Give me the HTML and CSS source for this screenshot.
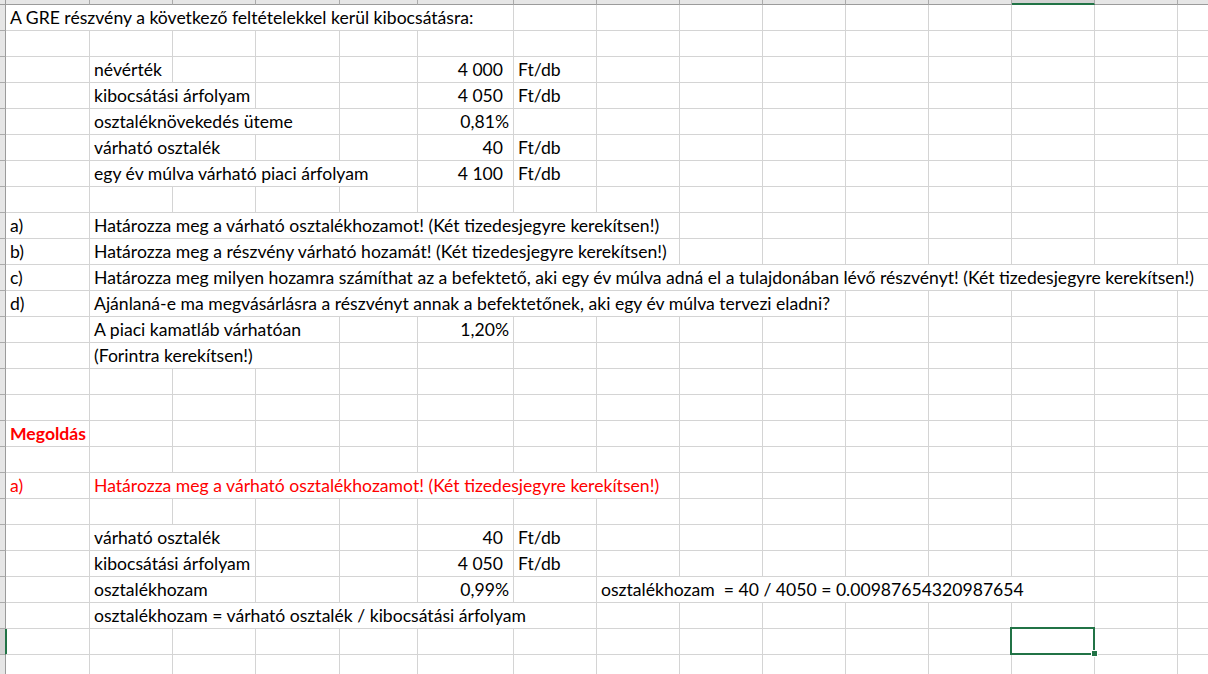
FILE: index.html
```html
<!DOCTYPE html>
<html lang="hu">
<head>
<meta charset="utf-8">
<title>GRE részvény</title>
<link rel="stylesheet" href="styles.css">
</head>
<body>
<div class="sheet">
  <!-- column header strip -->
  <div class="corner"></div>
  <div class="h"></div><div class="h"></div><div class="h"></div><div class="h"></div><div class="h"></div>
  <div class="h"></div><div class="h"></div><div class="h"></div><div class="h"></div><div class="h"></div>
  <div class="h"></div><div class="h"></div><div class="h hsel"></div><div class="h"></div><div class="h"></div>

  <!-- row 1 -->
  <div class="rh"></div>
  <div class="c s6">A GRE részvény a következő feltételekkel kerül kibocsátásra:</div>
  <div class="c"></div><div class="c"></div><div class="c"></div><div class="c"></div><div class="c"></div>
  <div class="c"></div><div class="c"></div><div class="c"></div><div class="c"></div>

  <!-- row 2 -->
  <div class="rh"></div>
  <div class="c"></div><div class="c"></div><div class="c"></div><div class="c"></div><div class="c"></div>
  <div class="c"></div><div class="c"></div><div class="c"></div><div class="c"></div><div class="c"></div>
  <div class="c"></div><div class="c"></div><div class="c"></div><div class="c"></div><div class="c"></div>

  <!-- row 3 -->
  <div class="rh"></div>
  <div class="c"></div>
  <div class="c">névérték</div>
  <div class="c"></div><div class="c"></div><div class="c"></div>
  <div class="c num">4 000</div>
  <div class="c">Ft/db</div>
  <div class="c"></div><div class="c"></div><div class="c"></div><div class="c"></div>
  <div class="c"></div><div class="c"></div><div class="c"></div><div class="c"></div>

  <!-- row 4 -->
  <div class="rh"></div>
  <div class="c"></div>
  <div class="c s2">kibocsátási árfolyam</div>
  <div class="c"></div><div class="c"></div>
  <div class="c num">4 050</div>
  <div class="c">Ft/db</div>
  <div class="c"></div><div class="c"></div><div class="c"></div><div class="c"></div>
  <div class="c"></div><div class="c"></div><div class="c"></div><div class="c"></div>

  <!-- row 5 -->
  <div class="rh"></div>
  <div class="c"></div>
  <div class="c s3">osztaléknövekedés üteme</div>
  <div class="c"></div>
  <div class="c pct">0,81%</div>
  <div class="c"></div>
  <div class="c"></div><div class="c"></div><div class="c"></div><div class="c"></div>
  <div class="c"></div><div class="c"></div><div class="c"></div><div class="c"></div>

  <!-- row 6 -->
  <div class="rh"></div>
  <div class="c"></div>
  <div class="c s2">várható osztalék</div>
  <div class="c"></div><div class="c"></div>
  <div class="c num">40</div>
  <div class="c">Ft/db</div>
  <div class="c"></div><div class="c"></div><div class="c"></div><div class="c"></div>
  <div class="c"></div><div class="c"></div><div class="c"></div><div class="c"></div>

  <!-- row 7 -->
  <div class="rh"></div>
  <div class="c"></div>
  <div class="c s4">egy év múlva várható piaci árfolyam</div>
  <div class="c num">4 100</div>
  <div class="c">Ft/db</div>
  <div class="c"></div><div class="c"></div><div class="c"></div><div class="c"></div>
  <div class="c"></div><div class="c"></div><div class="c"></div><div class="c"></div>

  <!-- row 8 -->
  <div class="rh"></div>
  <div class="c"></div><div class="c"></div><div class="c"></div><div class="c"></div><div class="c"></div>
  <div class="c"></div><div class="c"></div><div class="c"></div><div class="c"></div><div class="c"></div>
  <div class="c"></div><div class="c"></div><div class="c"></div><div class="c"></div><div class="c"></div>

  <!-- row 9 -->
  <div class="rh"></div>
  <div class="c">a)</div>
  <div class="c s7">Határozza meg a várható osztalékhozamot! (Két tizedesjegyre kerekítsen!)</div>
  <div class="c"></div><div class="c"></div><div class="c"></div><div class="c"></div>
  <div class="c"></div><div class="c"></div><div class="c"></div>

  <!-- row 10 -->
  <div class="rh"></div>
  <div class="c">b)</div>
  <div class="c s7">Határozza meg a részvény várható hozamát! (Két tizedesjegyre kerekítsen!)</div>
  <div class="c"></div><div class="c"></div><div class="c"></div><div class="c"></div>
  <div class="c"></div><div class="c"></div><div class="c"></div>

  <!-- row 11 -->
  <div class="rh"></div>
  <div class="c">c)</div>
  <div class="c s14">Határozza meg milyen hozamra számíthat az a befektető, aki egy év múlva adná el a tulajdonában lévő részvényt! (Két tizedesjegyre kerekítsen!)</div>

  <!-- row 12 -->
  <div class="rh"></div>
  <div class="c">d)</div>
  <div class="c s9">Ajánlaná-e ma megvásárlásra a részvényt annak a befektetőnek, aki egy év múlva tervezi eladni?</div>
  <div class="c"></div><div class="c"></div><div class="c"></div><div class="c"></div><div class="c"></div>

  <!-- row 13 -->
  <div class="rh"></div>
  <div class="c"></div>
  <div class="c s3">A piaci kamatláb várhatóan</div>
  <div class="c"></div>
  <div class="c pct">1,20%</div>
  <div class="c"></div>
  <div class="c"></div><div class="c"></div><div class="c"></div><div class="c"></div>
  <div class="c"></div><div class="c"></div><div class="c"></div><div class="c"></div>

  <!-- row 14 -->
  <div class="rh"></div>
  <div class="c"></div>
  <div class="c s3">(Forintra kerekítsen!)</div>
  <div class="c"></div><div class="c"></div><div class="c"></div>
  <div class="c"></div><div class="c"></div><div class="c"></div><div class="c"></div>
  <div class="c"></div><div class="c"></div><div class="c"></div><div class="c"></div>

  <!-- row 15 -->
  <div class="rh"></div>
  <div class="c"></div><div class="c"></div><div class="c"></div><div class="c"></div><div class="c"></div>
  <div class="c"></div><div class="c"></div><div class="c"></div><div class="c"></div><div class="c"></div>
  <div class="c"></div><div class="c"></div><div class="c"></div><div class="c"></div><div class="c"></div>

  <!-- row 16 -->
  <div class="rh"></div>
  <div class="c"></div><div class="c"></div><div class="c"></div><div class="c"></div><div class="c"></div>
  <div class="c"></div><div class="c"></div><div class="c"></div><div class="c"></div><div class="c"></div>
  <div class="c"></div><div class="c"></div><div class="c"></div><div class="c"></div><div class="c"></div>

  <!-- row 17 -->
  <div class="rh"></div>
  <div class="c red bold">Megoldás</div>
  <div class="c"></div><div class="c"></div><div class="c"></div><div class="c"></div>
  <div class="c"></div><div class="c"></div><div class="c"></div><div class="c"></div><div class="c"></div>
  <div class="c"></div><div class="c"></div><div class="c"></div><div class="c"></div><div class="c"></div>

  <!-- row 18 -->
  <div class="rh"></div>
  <div class="c"></div><div class="c"></div><div class="c"></div><div class="c"></div><div class="c"></div>
  <div class="c"></div><div class="c"></div><div class="c"></div><div class="c"></div><div class="c"></div>
  <div class="c"></div><div class="c"></div><div class="c"></div><div class="c"></div><div class="c"></div>

  <!-- row 19 -->
  <div class="rh"></div>
  <div class="c red">a)</div>
  <div class="c s7 red">Határozza meg a várható osztalékhozamot! (Két tizedesjegyre kerekítsen!)</div>
  <div class="c"></div><div class="c"></div><div class="c"></div><div class="c"></div>
  <div class="c"></div><div class="c"></div><div class="c"></div>

  <!-- row 20 -->
  <div class="rh"></div>
  <div class="c"></div><div class="c"></div><div class="c"></div><div class="c"></div><div class="c"></div>
  <div class="c"></div><div class="c"></div><div class="c"></div><div class="c"></div><div class="c"></div>
  <div class="c"></div><div class="c"></div><div class="c"></div><div class="c"></div><div class="c"></div>

  <!-- row 21 -->
  <div class="rh"></div>
  <div class="c"></div>
  <div class="c s2">várható osztalék</div>
  <div class="c"></div><div class="c"></div>
  <div class="c num">40</div>
  <div class="c">Ft/db</div>
  <div class="c"></div><div class="c"></div><div class="c"></div><div class="c"></div>
  <div class="c"></div><div class="c"></div><div class="c"></div><div class="c"></div>

  <!-- row 22 -->
  <div class="rh"></div>
  <div class="c"></div>
  <div class="c s2">kibocsátási árfolyam</div>
  <div class="c"></div><div class="c"></div>
  <div class="c num">4 050</div>
  <div class="c">Ft/db</div>
  <div class="c"></div><div class="c"></div><div class="c"></div><div class="c"></div>
  <div class="c"></div><div class="c"></div><div class="c"></div><div class="c"></div>

  <!-- row 23 -->
  <div class="rh"></div>
  <div class="c"></div>
  <div class="c s2">osztalékhozam</div>
  <div class="c"></div><div class="c"></div>
  <div class="c pct">0,99%</div>
  <div class="c"></div>
  <div class="c s6">osztalékhozam  = 40 / 4050 = 0.00987654320987654</div>
  <div class="c"></div><div class="c"></div>

  <!-- row 24 -->
  <div class="rh"></div>
  <div class="c"></div>
  <div class="c s6">osztalékhozam = várható osztalék / kibocsátási árfolyam</div>
  <div class="c"></div><div class="c"></div><div class="c"></div>
  <div class="c"></div><div class="c"></div><div class="c"></div><div class="c"></div><div class="c"></div>

  <!-- row 25 -->
  <div class="rh rhsel"></div>
  <div class="c"></div><div class="c"></div><div class="c"></div><div class="c"></div><div class="c"></div><div class="c"></div>
  <div class="c"></div><div class="c"></div><div class="c"></div><div class="c"></div><div class="c"></div><div class="c"></div>
  <div class="c sel"><span class="selbox"></span><span class="handle"></span></div>
  <div class="c"></div><div class="c"></div>

  <!-- row 26 -->
  <div class="rh"></div>
  <div class="c"></div><div class="c"></div><div class="c"></div><div class="c"></div><div class="c"></div>
  <div class="c"></div><div class="c"></div><div class="c"></div><div class="c"></div><div class="c"></div>
  <div class="c"></div><div class="c"></div><div class="c"></div><div class="c"></div><div class="c"></div>
</div>
</body>
</html>
```

FILE: styles.css
```css
html, body {
  margin: 0;
  padding: 0;
  background: #ffffff;
}

body {
  width: 1208px;
  height: 674px;
  overflow: hidden;
}

.sheet {
  display: grid;
  grid-template-columns: 6px 84px 83px 83px 84px 78px 96px 83px 83px 83px 83px 83px 83px 83px 83px 31px;
  grid-template-rows: 5px;
  grid-auto-rows: 26px;
  height: 674px;
  overflow: hidden;
  font-family: "Lato", "Liberation Sans", sans-serif;
  font-size: 17.6px;
  color: #000000;
}

.corner {
  background: #e6e6e6;
  border-right: 1px solid #9b9b9b;
  border-bottom: 1px solid #9b9b9b;
  box-sizing: border-box;
}

.h {
  background: #e6e6e6;
  border-right: 1px solid #ababab;
  border-bottom: 1px solid #9b9b9b;
  box-sizing: border-box;
}

.hsel {
  background: #d2d2d2;
  border-bottom: 2px solid #217346;
}

.rh {
  background: #e6e6e6;
  border-right: 1px solid #9b9b9b;
  border-bottom: 1px solid #ababab;
  box-sizing: border-box;
}

.rhsel {
  background: #d2d2d2;
  border-right: 1px solid #217346;
  box-shadow: 1px 0 0 #217346;
}

.c {
  box-sizing: border-box;
  border-right: 1px solid #d4d4d4;
  border-bottom: 1px solid #d4d4d4;
  padding: 0 3px 0 4px;
  line-height: 25px;
  white-space: pre;
  min-width: 0;
}

.s2 { grid-column: span 2; }
.s3 { grid-column: span 3; }
.s4 { grid-column: span 4; }
.s6 { grid-column: span 6; }
.s7 { grid-column: span 7; }
.s9 { grid-column: span 9; }
.s14 { grid-column: span 14; }

.num {
  text-align: right;
  padding-right: 10px;
}

.pct {
  text-align: right;
  padding-right: 4px;
}

.red { color: #ff0000; }
.bold { font-weight: 700; }

.sel {
  position: relative;
}

.selbox {
  position: absolute;
  left: -2px;
  top: -2px;
  right: -1px;
  bottom: -1px;
  border: 2px solid #217346;
}

.handle {
  position: absolute;
  right: -3px;
  bottom: -2px;
  width: 5px;
  height: 5px;
  background: #217346;
  outline: 1px solid #ffffff;
}
```
